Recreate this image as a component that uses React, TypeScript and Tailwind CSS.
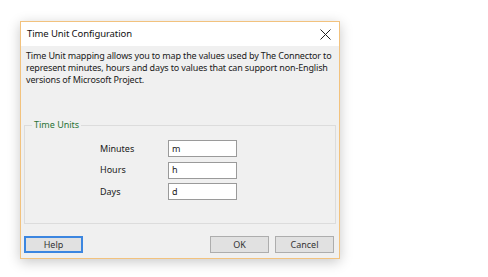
const units = [
  { label: "Minutes", value: "m" },
  { label: "Hours", value: "h" },
  { label: "Days", value: "d" },
]

function CloseIcon() {
  return (
    <svg width="11" height="11" viewBox="0 0 11 11" className="text-[#222]">
      <path d="M0.5 0.5 L10.5 10.5 M10.5 0.5 L0.5 10.5" stroke="currentColor" strokeWidth="1" />
    </svg>
  )
}

function Button({ children, focused }: { children: string; focused?: boolean }) {
  return (
    <button
      className={
        focused
          ? "h-[17px] w-[59px] border-2 border-[#3c86e0] bg-[#e1e1e1] text-[9px] leading-none text-[#333]"
          : "h-[17px] w-[59px] border border-[#adadad] bg-[#e1e1e1] text-[9px] leading-none text-[#333]"
      }
    >
      {children}
    </button>
  )
}

export default function App() {
  return (
    <div
      className="min-h-[277px] w-[488px] bg-white pl-[20px] pt-[21px] text-[9px] text-[#1a1a1a]"
      style={{ fontFamily: '"Noto Sans", "Open Sans", sans-serif' }}
    >
      <div className="flex h-[238px] w-[320px] flex-col border border-[#f2c27e] bg-[#f0f0f0] shadow-[0_3px_12px_rgba(0,0,0,0.22)]">
        <div className="flex h-[24px] items-center justify-between bg-white pl-[6px] pr-[8px] pt-[1px]">
          <span className="text-[9.5px] tracking-[-0.1px] text-[#111]">Time Unit Configuration</span>
          <CloseIcon />
        </div>

        <p className="mt-[4px] pl-[5px] pr-[3px] leading-[12px] tracking-[-0.15px]">
          Time Unit mapping allows you to map the values used by The Connector to represent minutes, hours and
          days to values that can support non-English versions of Microsoft Project.
        </p>

        <fieldset className="mx-[3px] mt-[33px] h-[105px] border border-[#dcdcdc] pl-[75px]">
          <legend className="ml-[-68px] px-[2px] leading-[12px] text-[#2a7436]">Time Units</legend>
          <div className="mt-[9px] flex flex-col gap-[4.5px]">
            {units.map((u) => (
              <div key={u.label} className="flex h-[17px] items-center">
                <span className="w-[68px]">{u.label}</span>
                <div className="flex h-[17px] w-[69px] items-center border border-[#9a9a9a] bg-white pl-[3px]">
                  {u.value}
                </div>
              </div>
            ))}
          </div>
        </fieldset>

        <div className="mt-[12px] flex items-center justify-between pl-[3px] pr-[5px]">
          <Button focused>Help</Button>
          <div className="flex gap-[6px]">
            <Button>OK</Button>
            <Button>Cancel</Button>
          </div>
        </div>
      </div>
    </div>
  )
}
